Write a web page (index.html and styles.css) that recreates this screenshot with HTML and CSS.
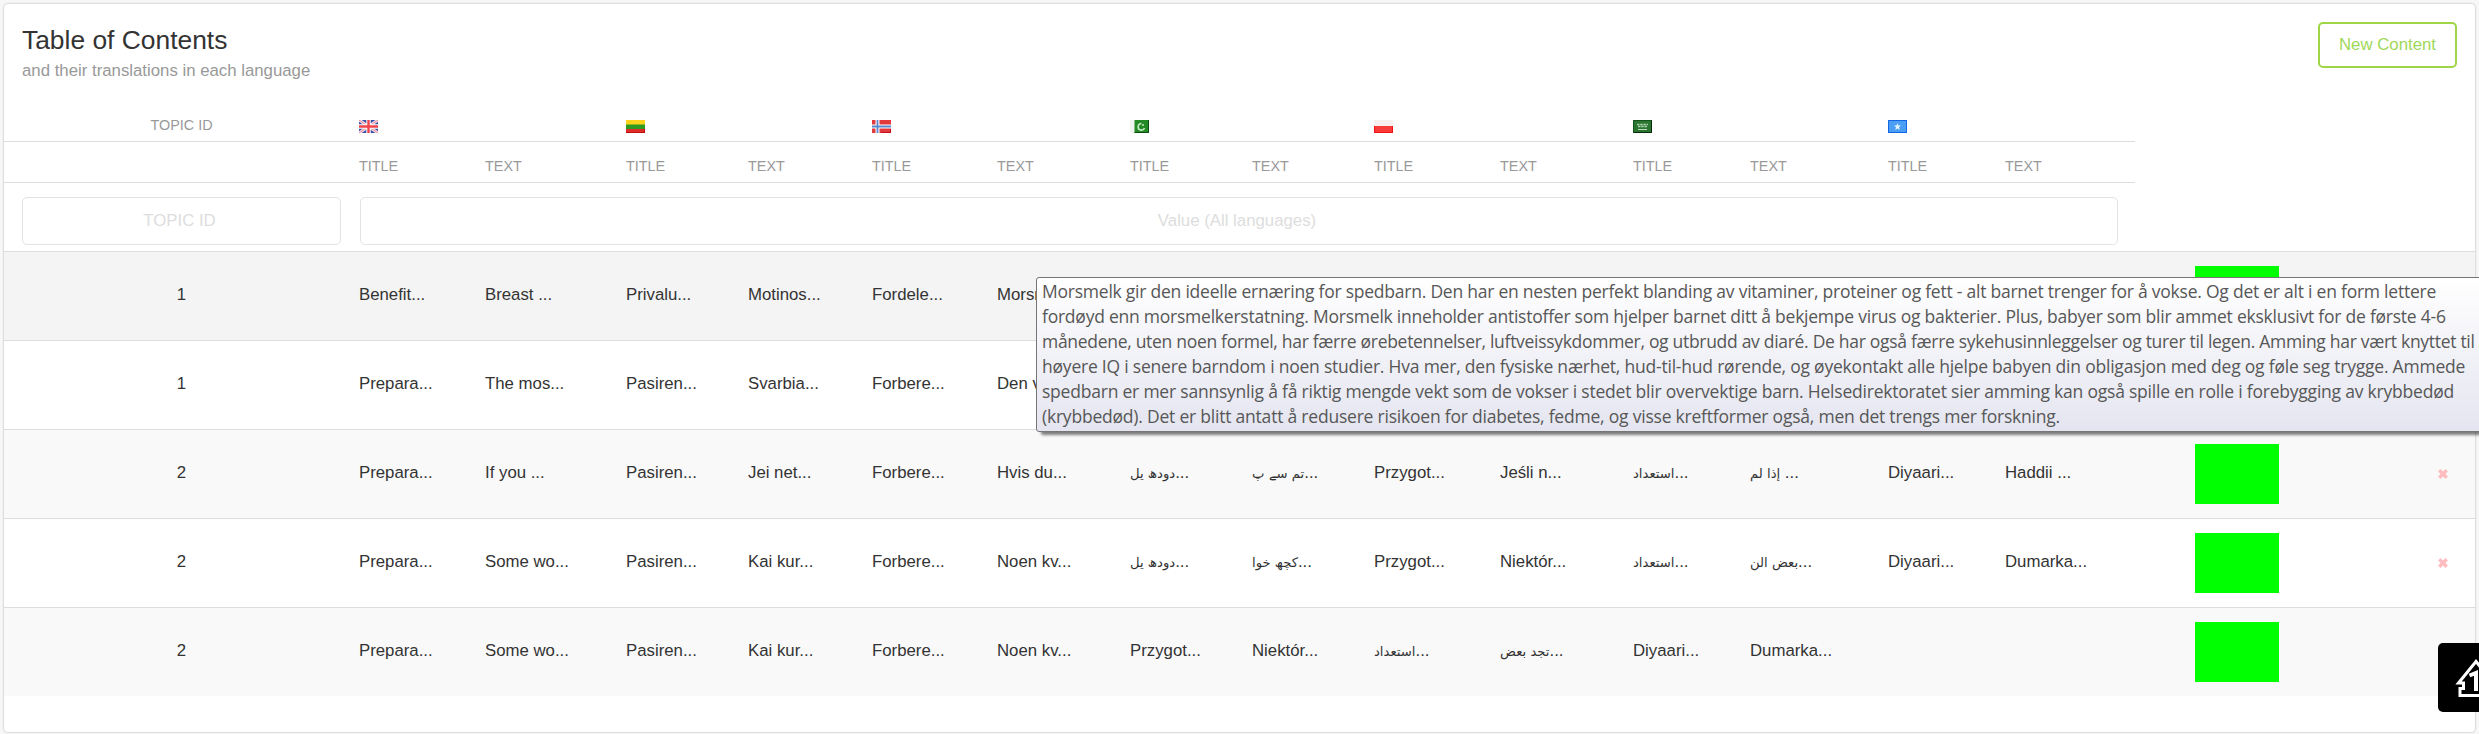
FILE: index.html
```
<!DOCTYPE html>
<html lang="en">
<head>
<meta charset="utf-8">
<title>Table of Contents</title>
<link rel="stylesheet" href="styles.css">
</head>
<body>
<main class="card">
  <header class="card-head">
    <div>
      <h1 class="title">Table of Contents</h1>
      <p class="subtitle">and their translations in each language</p>
    </div>
    <button class="btn">New Content</button>
  </header>

  <div class="row flags">
    <span class="id">TOPIC ID</span>
    <span class="lang"><svg class="flag" viewBox="0 0 19 13"><rect width="19" height="13" fill="#3a51a8"/><path d="M0 0L19 13M19 0L0 13" stroke="#f3dfe8" stroke-width="3"/><path d="M0 0L19 13M19 0L0 13" stroke="#f08a90" stroke-width="1"/><path d="M9.5 0V13M0 6.5H19" stroke="#fff" stroke-width="4.400"/><path d="M9.500 0V13M0 6.500H19" stroke="#f2444a" stroke-width="2.400"/></svg></span>
    <span class="lang"><svg class="flag" viewBox="0 0 19 13"><rect width="19" height="13" fill="#e02b2b"/><rect width="19" height="9" fill="#2f9a22"/><rect width="19" height="4.500" fill="#fbd31c"/><path d="M0 12.500H19M18.500 9V13" stroke="#c40d0d"/></svg></span>
    <span class="lang"><svg class="flag" viewBox="0 0 19 13"><rect width="19" height="13" fill="#e2393d"/><path d="M5.500 0V13M0 6.500H19" stroke="#fff" stroke-width="4"/><path d="M5.500 0V13M0 6.500H19" stroke="#5a88cf" stroke-width="1.800"/><path d="M9 12.500H19M18.500 9V13" stroke="#c51015"/></svg></span>
    <span class="lang"><svg class="flag" viewBox="0 0 19 13"><rect width="19" height="13" fill="#248a25"/><rect width="4.500" height="13" fill="#f0f4ee"/><path d="M4.500 12.500H18.500V0" fill="none" stroke="#0b4d10"/><path d="M11.500 3.500A3.300 3.300 0 1 0 14.500 8" fill="none" stroke="#c4e6c2" stroke-width="1.600"/><circle cx="13" cy="5" r="1" fill="#c4e6c2"/></svg></span>
    <span class="lang"><svg class="flag" viewBox="0 0 19 13"><rect width="19" height="13" fill="#f73a3a"/><rect width="19" height="6" fill="#f9eeee"/><path d="M.5 6V12.500H18.500V6" fill="none" stroke="#f01212"/></svg></span>
    <span class="lang"><svg class="flag" viewBox="0 0 19 13"><rect width="19" height="13" fill="#2a7530"/><path d="M0 12.500H18.500V0" fill="none" stroke="#08290b"/><path d="M.5 13V.5H19" fill="none" stroke="#145319"/><path d="M4 4.500H15M5 6.500H14" stroke="#a9cfab" stroke-width="1.500" stroke-dasharray="2.500 .7"/><path d="M5 9.500H14" stroke="#bcd9bd"/></svg></span>
    <span class="lang"><svg class="flag" viewBox="0 0 19 13"><rect width="19" height="13" fill="#4a9ff5"/><rect x=".5" y=".5" width="18" height="12" fill="none" stroke="#1566e4"/><path d="M9.500 3L10.400 5.500H13L11 7.200L11.700 10L9.500 8.400L7.300 10L8 7.200L6 5.500H8.600Z" fill="#e6f4ff"/></svg></span>
  </div>
  <div class="row heads">
    <span class="id"></span>
    <span>TITLE</span><span>TEXT</span><span>TITLE</span><span>TEXT</span><span>TITLE</span><span>TEXT</span><span>TITLE</span><span>TEXT</span><span>TITLE</span><span>TEXT</span><span>TITLE</span><span>TEXT</span><span>TITLE</span><span>TEXT</span>
  </div>
  <div class="filters">
    <input class="filter filter-id" placeholder="TOPIC ID">
    <input class="filter filter-value" placeholder="Value (All languages)">
  </div>

  <div class="row item hovered">
    <span class="id">1</span>
    <span>Benefit...</span><span>Breast ...</span><span>Privalu...</span><span>Motinos...</span><span>Fordele...</span><span>Morsme...</span><span></span><span></span><span></span><span></span><span></span><span></span><span></span><span></span>
    <i class="swatch"></i>
  </div>
  <div class="row item">
    <span class="id">1</span>
    <span>Prepara...</span><span>The mos...</span><span>Pasiren...</span><span>Svarbia...</span><span>Forbere...</span><span>Den vi...</span><span></span><span></span><span></span><span></span><span></span><span></span><span></span><span></span>
    <i class="swatch"></i>
  </div>
  <div class="row item odd">
    <span class="id">2</span>
    <span>Prepara...</span><span>If you ...</span><span>Pasiren...</span><span>Jei net...</span><span>Forbere...</span><span>Hvis du...</span><span><b class="ar">دودھ یل</b>...</span><span><b class="ar">تم سے پ</b>...</span><span>Przygot...</span><span>Jeśli n...</span><span><b class="ar">استعداد</b>...</span><span><b class="ar">إذا لم</b> ...</span><span>Diyaari...</span><span>Haddii ...</span>
    <i class="swatch"></i>
    <svg class="remove" viewBox="0 0 10 10"><path d="M1.300 1.300L8.700 8.700M8.700 1.300L1.300 8.700"/></svg>
  </div>
  <div class="row item">
    <span class="id">2</span>
    <span>Prepara...</span><span>Some wo...</span><span>Pasiren...</span><span>Kai kur...</span><span>Forbere...</span><span>Noen kv...</span><span><b class="ar">دودھ یل</b>...</span><span><b class="ar">کچھ خوا</b>...</span><span>Przygot...</span><span>Niektór...</span><span><b class="ar">استعداد</b>...</span><span><b class="ar">بعض الن</b>...</span><span>Diyaari...</span><span>Dumarka...</span>
    <i class="swatch"></i>
    <svg class="remove" viewBox="0 0 10 10"><path d="M1.300 1.300L8.700 8.700M8.700 1.300L1.300 8.700"/></svg>
  </div>
  <div class="row item odd">
    <span class="id">2</span>
    <span>Prepara...</span><span>Some wo...</span><span>Pasiren...</span><span>Kai kur...</span><span>Forbere...</span><span>Noen kv...</span><span>Przygot...</span><span>Niektór...</span><span><b class="ar">استعداد</b>...</span><span><b class="ar">تجد بعض</b>...</span><span>Diyaari...</span><span>Dumarka...</span><span></span><span></span>
    <i class="swatch"></i>
  </div>
</main>

<div class="tooltip">
  <div class="snug">Morsmelk gir den ideelle ernæring for spedbarn. Den har en nesten perfekt blanding av vitaminer, proteiner og fett - alt barnet trenger for å vokse. Og det er alt i en form lettere</div>
  <div class="snug">fordøyd enn morsmelkerstatning. Morsmelk inneholder antistoffer som hjelper barnet ditt å bekjempe virus og bakterier. Plus, babyer som blir ammet eksklusivt for de første 4-6</div>
  <div class="tight">månedene, uten noen formel, har færre ørebetennelser, luftveissykdommer, og utbrudd av diaré. De har også færre sykehusinnleggelser og turer til legen. Amming har vært knyttet til</div>
  <div>høyere IQ i senere barndom i noen studier. Hva mer, den fysiske nærhet, hud-til-hud rørende, og øyekontakt alle hjelpe babyen din obligasjon med deg og føle seg trygge. Ammede</div>
  <div>spedbarn er mer sannsynlig å få riktig mengde vekt som de vokser i stedet blir overvektige barn. Helsedirektoratet sier amming kan også spille en rolle i forebygging av krybbedød</div>
  <div>(krybbedød). Det er blitt antatt å redusere risikoen for diabetes, fedme, og visse kreftformer også, men det trengs mer forskning.</div>
</div>

<div class="to-top">
  <svg class="to-top-icon" viewBox="0 0 44 42"><path d="M22 4.500L4.500 26H9.500V31.500H6V38.500H38V31.500H34.500V26H39.500Z" fill="none" stroke="#fff" stroke-width="3"/><path d="M15.500 18.500L22 16V34" fill="none" stroke="#fff" stroke-width="4"/></svg>
</div>
</body>
</html>
```
FILE: styles.css
```
* { box-sizing: border-box; }
html { overflow: hidden; }
body {
  margin: 0;
  width: 2479px;
  height: 734px;
  padding: 3px 3px 1px;
  overflow: hidden;
  background: #f7f7f7;
  color: #333;
  font: 16.8px/24px "Liberation Sans", Arial, "DejaVu Sans", sans-serif;
}
.card {
  height: 730px;
  border: 1px solid #dedede;
  border-radius: 5px;
  background: #fff;
  box-shadow: 0 0 2px rgba(0, 0, 0, .08);
}
.card-head {
  display: flex;
  justify-content: space-between;
  align-items: flex-start;
  height: 97px;
  padding: 18px 18px 0;
}
.title { margin: 3px 0 0; font-size: 26.4px; font-weight: 400; line-height: 30px; }
.subtitle { margin: 4px 0 0; line-height: 24px; color: #999; }
.btn {
  width: 139px;
  height: 46px;
  padding: 0;
  border: 2px solid #a0d548;
  border-radius: 5px;
  background: #fff;
  color: #a0d85a;
  font: inherit;
}
.row {
  display: grid;
  grid-template-columns: 355px 126px 141px 122px 124px 125px 133px 122px 122px 126px 133px 117px 138px 117px 130px 60px 84px 159px 10px;
  align-items: center;
  white-space: nowrap;
}
.id { text-align: center; }
.flags, .heads { width: 2131px; border-bottom: 1px solid #ddd; color: #999; font-size: 14.4px; }
.flags { height: 41px; padding-top: 7px; }
.flags .lang { grid-column: span 2; height: 13px; }
.flag { display: block; width: 19px; height: 13px; margin-top: 2px; }
.heads { height: 41px; padding-top: 7px; }
.filters { display: flex; gap: 19px; height: 68px; padding: 14px 18px 0; }
.filter {
  height: 48px;
  padding: 0 11px 0 7px;
  border: 1px solid #e3e3e3;
  border-radius: 5px;
  background: #fff;
  font: inherit;
  text-align: center;
}
.filter::placeholder { color: #ddd; opacity: 1; }
.filter-id { width: 319px; }
.filter-value { width: 1758px; }
.item { height: 89px; border-top: 1px solid #ddd; }
.item > span { padding-bottom: 2px; }
.odd { background: #f9f9f9; }
.hovered { background: #f4f4f4; }
.ar { font: 400 13.2px/20px "DejaVu Sans", sans-serif; }
.swatch { grid-column: 17; width: 84px; height: 60px; background: #0f0; }
.remove { grid-column: 19; width: 10px; height: 10px; }
.remove path { fill: none; stroke: #ffbcbe; stroke-width: 3.4; }
.tooltip {
  position: absolute;
  left: 1036px;
  top: 277px;
  width: 1460px;
  height: 155px;
  padding: 1px 5px;
  border: 1px solid #767676;
  border-radius: 3px;
  background: linear-gradient(#fff, #e4e5f0);
  box-shadow: 4px 4px 3px -1px rgba(0, 0, 0, .5);
  color: #575757;
  font: 17.5px/25px "Open Sans", sans-serif;
  letter-spacing: -.215px;
  white-space: nowrap;
}
.snug { letter-spacing: -.235px; }
.tight { letter-spacing: -.3px; }
.to-top {
  position: absolute;
  left: 2438px;
  top: 643px;
  width: 69px;
  height: 69px;
  padding: 14px 16px;
  border-radius: 5px;
  background: #000;
}
.to-top-icon { display: block; width: 44px; height: 42px; }
```
